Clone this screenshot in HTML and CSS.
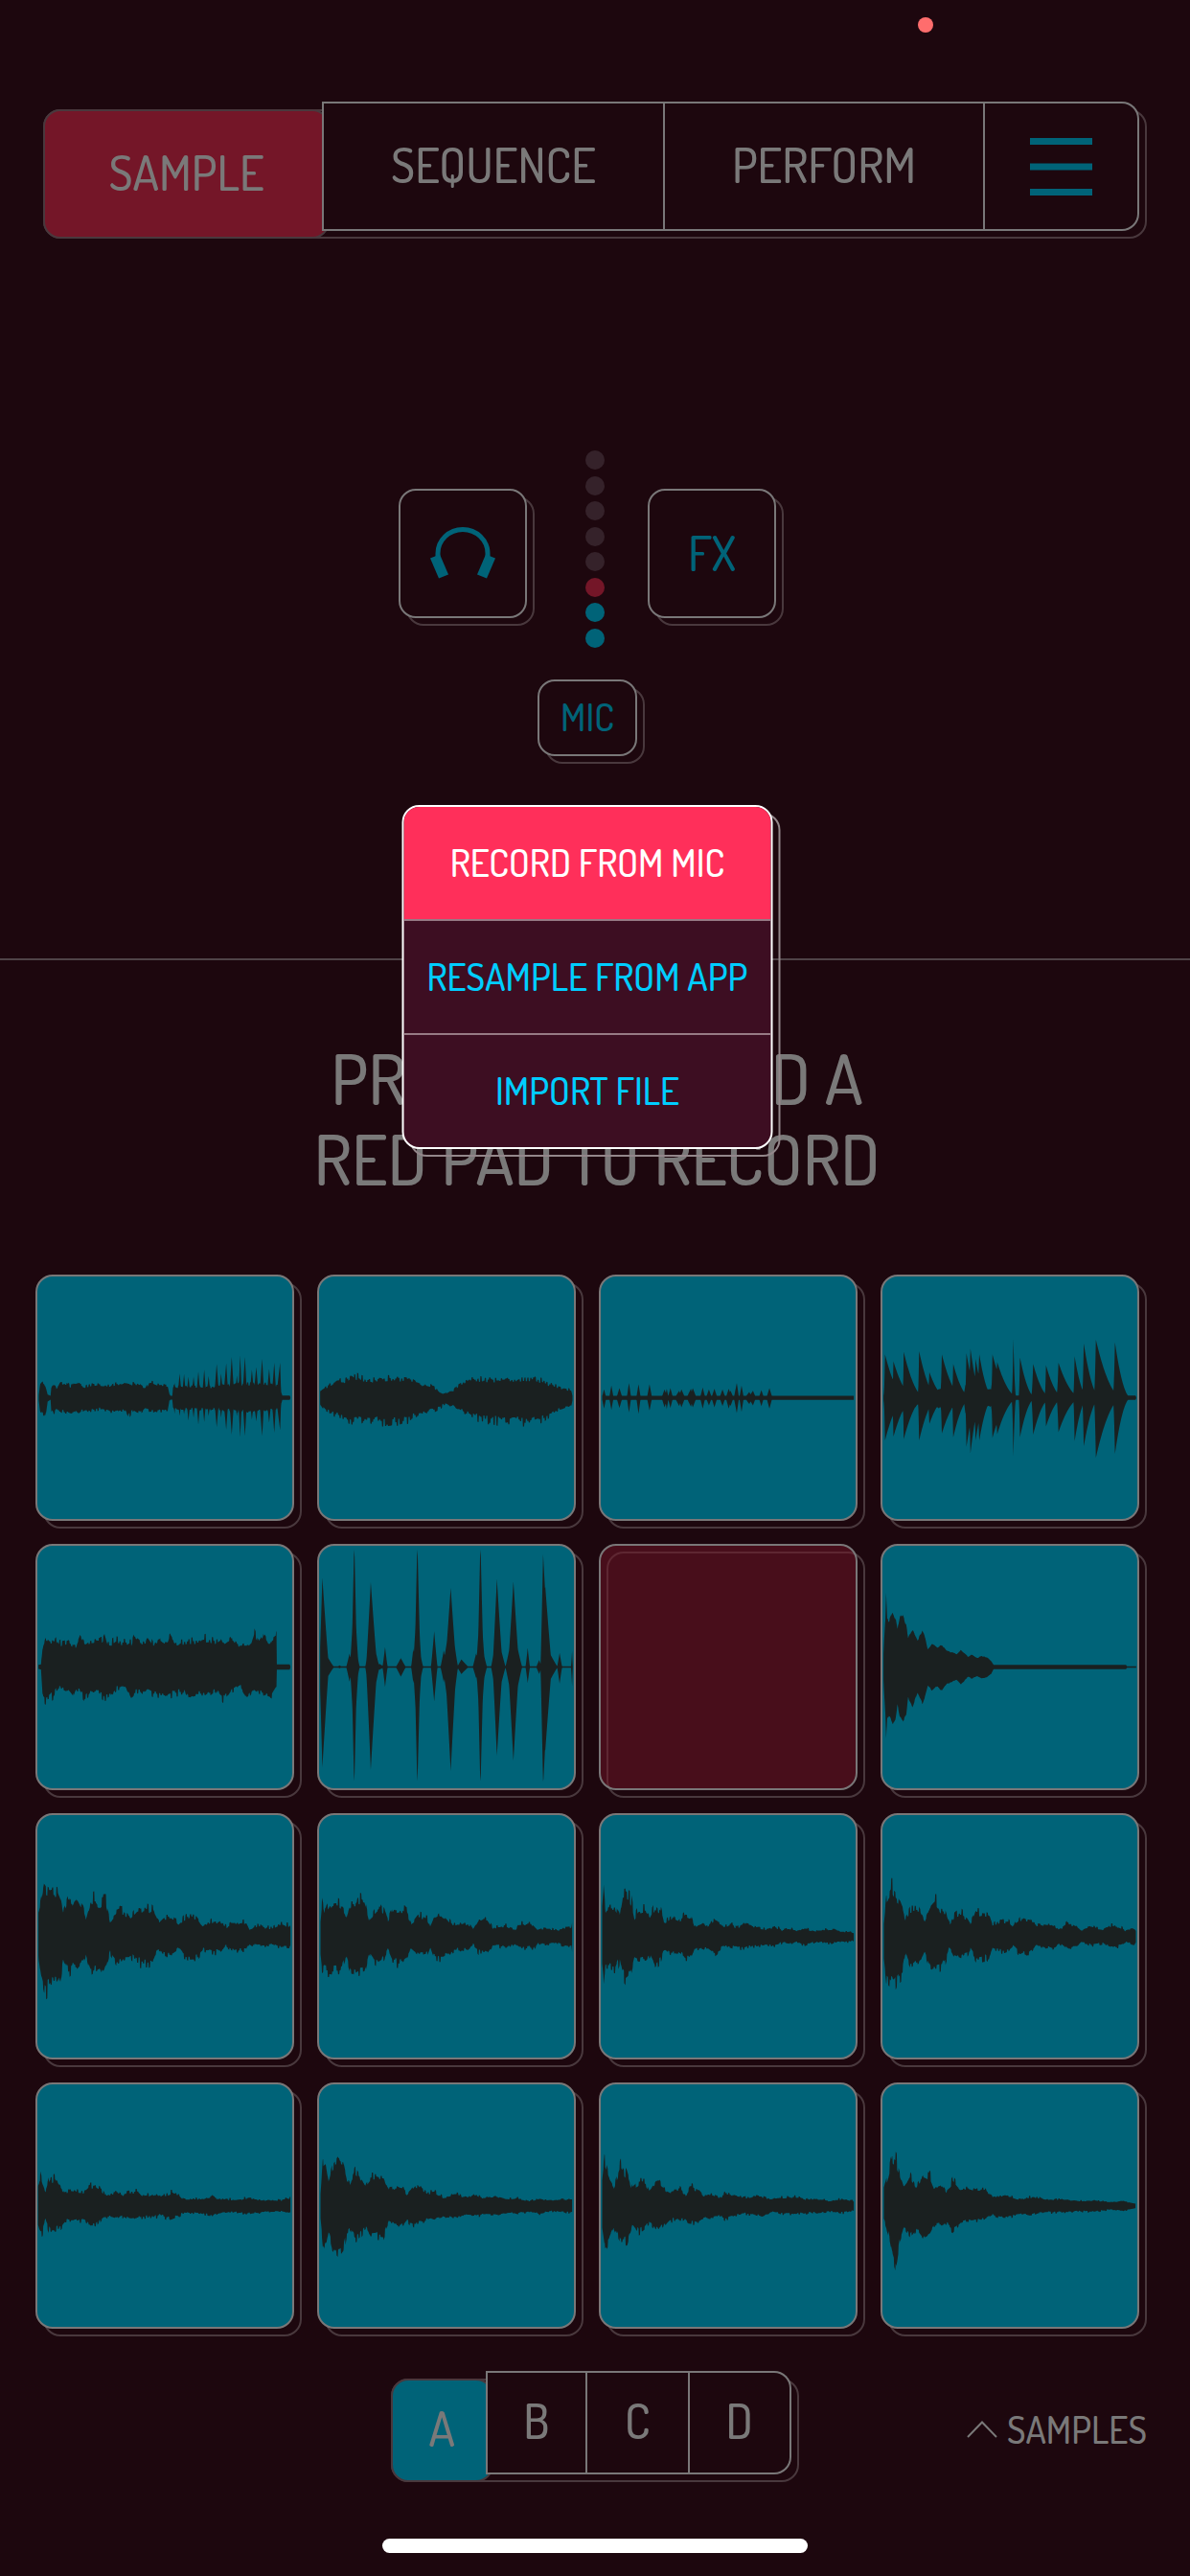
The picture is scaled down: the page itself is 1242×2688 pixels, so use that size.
FILE: index.html
```html
<!DOCTYPE html>
<html lang="en">
<head>
<meta charset="utf-8">
<meta name="viewport" content="width=device-width, initial-scale=1">
<title>Sampler</title>
<link rel="stylesheet" href="styles.css">
</head>
<body>
<div class="app">
  <div class="status-bar"><span class="recording-dot" title="Microphone in use"></span></div>

  <nav class="tabs segmented">
    <button class="segment segment-pressed tab-pressed" type="button">SAMPLE</button>
    <button class="segment segment-first" type="button">SEQUENCE</button>
    <button class="segment" type="button">PERFORM</button>
    <button class="segment segment-last segment-icon" type="button" aria-label="Menu">
      <svg class="menu-icon" viewBox="0 0 65 60" aria-hidden="true"><path d="M0 3.5H65M0 30H65M0 56.5H65"/></svg>
    </button>
  </nav>

  <main>
    <section class="input-panel">
      <div class="input-row">
        <button class="raised square-button" type="button" aria-label="Monitor">
          <svg class="headphone-icon" viewBox="0 0 68 54" aria-hidden="true">
            <path class="band" d="M8 31V27.500A26 25 0 0 1 60 27.500V31"/>
            <path class="cup" d="M0 32.500L10 28.500L19 49.500L9 53.500Z"/>
            <path class="cup" d="M68 32.500L58 28.500L49 49.500L59 53.500Z"/>
          </svg>
        </button>
        <div class="meter" role="img" aria-label="Input level">
          <span class="led"></span><span class="led"></span><span class="led"></span><span class="led"></span><span class="led"></span>
          <span class="led led-red"></span><span class="led led-blue"></span><span class="led led-blue"></span>
        </div>
        <button class="raised square-button" type="button">FX</button>
      </div>
      <div class="source">
        <button class="raised source-button" type="button" aria-haspopup="true" aria-expanded="true">MIC</button>
        <div class="source-menu">
          <ul class="source-list">
            <li><button class="source-item source-item-active" type="button">RECORD FROM MIC</button></li>
            <li><button class="source-item" type="button">RESAMPLE FROM APP</button></li>
            <li><button class="source-item" type="button">IMPORT FILE</button></li>
          </ul>
        </div>
      </div>
    </section>

    <section class="pad-panel">
      <h1 class="prompt">PRESS AND HOLD A<br>RED PAD TO RECORD</h1>
      <div class="pads">
        <button class="raised pad" type="button" aria-label="Pad 1"><svg class="wave" data-wave="0" viewBox="0 -380 695 760" preserveAspectRatio="none"></svg></button>
        <button class="raised pad" type="button" aria-label="Pad 2"><svg class="wave" data-wave="1" viewBox="0 -380 695 760" preserveAspectRatio="none"></svg></button>
        <button class="raised pad" type="button" aria-label="Pad 3"><svg class="wave" data-wave="2" viewBox="0 -380 695 760" preserveAspectRatio="none"></svg></button>
        <button class="raised pad" type="button" aria-label="Pad 4"><svg class="wave" data-wave="3" viewBox="0 -380 695 760" preserveAspectRatio="none"></svg></button>
        <button class="raised pad" type="button" aria-label="Pad 5"><svg class="wave" data-wave="4" viewBox="0 -380 695 760" preserveAspectRatio="none"></svg></button>
        <button class="raised pad" type="button" aria-label="Pad 6"><svg class="wave" data-wave="5" viewBox="0 -380 695 760" preserveAspectRatio="none"></svg></button>
        <button class="raised pad pad-empty" type="button" aria-label="Pad 7, empty"></button>
        <button class="raised pad" type="button" aria-label="Pad 8"><svg class="wave" data-wave="6" viewBox="0 -380 695 760" preserveAspectRatio="none"></svg></button>
        <button class="raised pad" type="button" aria-label="Pad 9"><svg class="wave" data-wave="7" viewBox="0 -380 695 760" preserveAspectRatio="none"></svg></button>
        <button class="raised pad" type="button" aria-label="Pad 10"><svg class="wave" data-wave="8" viewBox="0 -380 695 760" preserveAspectRatio="none"></svg></button>
        <button class="raised pad" type="button" aria-label="Pad 11"><svg class="wave" data-wave="9" viewBox="0 -380 695 760" preserveAspectRatio="none"></svg></button>
        <button class="raised pad" type="button" aria-label="Pad 12"><svg class="wave" data-wave="10" viewBox="0 -380 695 760" preserveAspectRatio="none"></svg></button>
        <button class="raised pad" type="button" aria-label="Pad 13"><svg class="wave" data-wave="11" viewBox="0 -380 695 760" preserveAspectRatio="none"></svg></button>
        <button class="raised pad" type="button" aria-label="Pad 14"><svg class="wave" data-wave="12" viewBox="0 -380 695 760" preserveAspectRatio="none"></svg></button>
        <button class="raised pad" type="button" aria-label="Pad 15"><svg class="wave" data-wave="13" viewBox="0 -380 695 760" preserveAspectRatio="none"></svg></button>
        <button class="raised pad" type="button" aria-label="Pad 16"><svg class="wave" data-wave="14" viewBox="0 -380 695 760" preserveAspectRatio="none"></svg></button>
      </div>
    </section>
  </main>

  <footer class="bottom-bar">
    <div class="banks segmented">
      <button class="segment segment-pressed bank-pressed" type="button">A</button>
      <button class="segment segment-first" type="button">B</button>
      <button class="segment" type="button">C</button>
      <button class="segment segment-last" type="button">D</button>
    </div>
    <button class="samples-button" type="button">
      <svg class="chevron" viewBox="0 0 32 18" aria-hidden="true"><path d="M1 17L16 1.500L31 17"/></svg>SAMPLES
    </button>
  </footer>
  <div class="home-indicator"></div>
</div>
<script src="waves.js"></script>
</body>
</html>
```
FILE: styles.css
```css
:root {
  --page: #1d070e;
  --line: #797778;
  --line-back: #49383d;
  --text: #7a7979;
  --blue: #006378;
  --red: #741628;
}

* {
  box-sizing: border-box;
}

body {
  margin: 0;
  background: var(--page);
  color: var(--text);
  font-family: "Dosis", "Open Sans Condensed Light", sans-serif;
  font-size: 39px;
  font-weight: 500;
  line-height: 48px;
}

button {
  margin: 0;
  padding: 0;
  border: 0;
  background: none;
  color: inherit;
  font: inherit;
}

.app {
  display: flex;
  flex-direction: column;
  min-height: 100vh;
}

.status-bar {
  display: flex;
  justify-content: flex-end;
  height: 106px;
  padding: 18px 268px 0 0;
}

.recording-dot {
  width: 16px;
  height: 16px;
  border-radius: 50%;
  background: #ff6d6d;
}

/* Segmented bars: a raised front plate over an offset back plate */
.segmented {
  position: relative;
  display: grid;
  font-size: 50px;
}

.segmented::before {
  content: "";
  position: absolute;
  inset: 8px -8px -8px 8px;
  border: 2px solid var(--line-back);
  border-radius: 18px;
}

.tabs {
  grid-template-columns: 299fr 358fr 334fr 161fr;
  height: 135px;
  margin: 0 53px 0 37px;
}

.segment {
  position: relative;
  z-index: 1;
  display: flex;
  align-items: center;
  justify-content: center;
  padding-bottom: 4px;
  border: solid var(--line);
  border-width: 2px 2px 2px 0;
  background: var(--page);
}

.segment-first {
  border-left-width: 2px;
}

.segment-last {
  border-radius: 0 18px 18px 0;
}

.segment-icon {
  padding-bottom: 0;
}

.segment-pressed {
  z-index: 0;
  margin: 8px -8px -8px 8px;
  border: 2px solid var(--line-back);
  border-radius: 18px;
}

.tab-pressed {
  background: var(--red);
}

.bank-pressed {
  background: var(--blue);
}

.menu-icon {
  width: 65px;
  height: 60px;
  fill: none;
  stroke: var(--blue);
  stroke-width: 7;
}

/* Raised buttons carry the same offset outline behind them */
.raised {
  position: relative;
  border: 2px solid var(--line);
  border-radius: 18px;
}

.raised::before {
  content: "";
  position: absolute;
  z-index: -1;
  inset: 6px -10px -10px 6px;
  border: 2px solid var(--line-back);
  border-radius: 18px;
}

.input-panel {
  display: flex;
  flex-direction: column;
  align-items: center;
  padding: 229px 53px 211px 37px;
  color: var(--blue);
}

.input-row {
  display: flex;
  align-items: flex-start;
}

.square-button,
.source-button {
  padding-bottom: 2px;
  background: var(--page);
}

.square-button {
  display: flex;
  align-items: center;
  justify-content: center;
  width: 134px;
  height: 135px;
  margin-top: 40px;
  font-size: 50px;
}

.headphone-icon {
  width: 68px;
  height: 54px;
}

.band {
  fill: none;
  stroke: var(--blue);
  stroke-width: 5;
}

.cup {
  fill: var(--blue);
}

.meter {
  display: flex;
  flex-direction: column;
  justify-content: space-between;
  height: 206px;
  margin: 0 45px 0 61px;
}

.led {
  width: 20px;
  height: 20px;
  border-radius: 50%;
  background: #35222a;
}

.led-red {
  background: var(--red);
}

.led-blue {
  background: var(--blue);
}

.source {
  position: relative;
  margin-top: 33px;
}

.source-button {
  display: block;
  width: 104px;
  height: 80px;
}

.source-menu {
  position: absolute;
  z-index: 2;
  top: 131px;
  left: 50%;
  width: 387px;
  transform: translateX(-50%);
}

.source-menu::before {
  content: "";
  position: absolute;
  inset: 8px -8px -8px 8px;
  border: 2px solid #93868a;
  border-radius: 18px;
}

.source-list {
  position: relative;
  margin: 0;
  padding: 0;
  overflow: hidden;
  border: 2px solid #fff;
  border-radius: 18px;
  background: #3d0e22;
  list-style: none;
}

.source-list li + li {
  border-top: 2px solid #977a85;
}

.source-item {
  display: block;
  width: 100%;
  height: 117px;
  padding-bottom: 2px;
  color: #00cdff;
}

.source-item-active {
  background: #ff2f5a;
  color: #fff;
}

.pad-panel {
  padding: 80px 53px 0 37px;
  border-top: 2px solid #4f4347;
}

.prompt {
  margin: 0 0 80px 20px;
  font-size: 73px;
  font-weight: 500;
  line-height: 84px;
  text-align: center;
}

.pads {
  display: grid;
  grid-template-columns: repeat(4, 1fr);
  gap: 24px;
}

.pad {
  aspect-ratio: 270 / 257;
  background: var(--blue);
}

.pad-empty {
  background: rgba(116, 22, 40, 0.5);
}

.wave {
  display: block;
  width: 100%;
  height: 100%;
  fill: #1a2020;
}

.bottom-bar {
  display: grid;
  grid-template-columns: 1fr auto 1fr;
  margin: 44px 53px 0 37px;
}

.banks {
  grid-column: 2;
  grid-template-columns: repeat(4, 1fr);
  width: 426px;
  height: 108px;
}

.samples-button {
  display: flex;
  align-items: center;
  justify-self: end;
  gap: 10px;
  margin: 14px -8px 0 0;
}

.chevron {
  width: 32px;
  height: 18px;
  fill: none;
  stroke: var(--text);
  stroke-width: 2;
}

.home-indicator {
  align-self: center;
  width: 444px;
  height: 15px;
  margin: 67px 0 24px;
  border-radius: 8px;
  background: #fff;
}
```
FILE: waves.js
```js
// Each sample: envelope points "x up down", roughness, and optional
// transients "x up down attack release" laid over the envelope.
const samples = [
  { rough: 0.14, env: "4 8 8,8 42 45,14 48 52,22 40 55,28 10 12,36 6 6,38 30 38,46 40 50,52 28 38,62 44 42,80 47 46,90 36 44,100 48 42,112 42 50,130 34 35,145 40 42,170 40 35,200 38 44,215 46 42,240 44 40,248 42 60,262 44 38,280 40 48,294 28 30,305 48 40,340 42 42,355 40 42,360 12 10,363 6 6,368 6 6,370 38 30,380 34 36,480 34 36,560 44 42,660 40 34,667 12 10,668 7 7,688 7 7,690 2 2", hits: "374 46 50 4 5,388 76 57 6 6,400 74 52 6 6,412 66 72 6 6,426 66 62 6 6,439 82 84 6 6,455 88 76 6 6,467 68 58 6 6,489 106 92 7 7,501 76 62 6 6,515 108 100 8 6,530 128 116 7 7,544 70 58 6 6,553 132 124 5 5,566 128 120 7 6,585 88 68 7 7,597 96 74 8 7,613 122 120 8 6,632 90 78 7 7,646 110 110 7 6,662 110 102 11 3" },
  { rough: 0.14, spikes: 0.2, env: "3 20 20,20 34 40,50 46 54,75 56 62,90 70 72,105 60 68,130 54 64,150 56 68,175 58 68,200 54 66,230 58 66,255 54 58,265 44 54,300 36 42,325 20 30,342 12 20,355 20 22,368 24 24,380 38 36,410 50 48,435 58 60,460 54 64,500 56 66,512 56 70,540 54 66,568 58 72,585 62 68,600 52 66,620 44 52,640 36 44,665 28 32,688 20 22,691 6 8" },
  { rough: 0.02, env: "4 6 7,690 6 7", hits: "9 26 34 6 6,29 38 38 6 6,51 30 32 8 8,77 46 46 6 6,103 42 50 6 6,133 42 40 7 7,174 26 30 8 8,180 28 36 5 5,190 30 32 7 7,214 22 26 12 6,220 26 30 8 10,246 28 28 12 6,251 30 30 8 10,278 32 34 7 7,295 26 24 8 8,310 28 30 8 8,332 26 26 8 8,349 28 34 8 8,354 22 26 8 8,371 46 48 8 6,384 38 44 6 6,405 18 20 12 8,415 22 24 12 8,438 24 26 7 7,460 30 34 8 8" },
  { rough: 0.07, pow: 2, env: "3 7 7,8 40 50,60 36 42,90 26 30,98 14 18,104 30 34,160 26 30,222 8 8,226 40 50,270 60 70,276 26 26,296 26 26,300 60 60,330 40 40,352 7 7,375 7 7,392 34 36,400 7 7,690 7 7,692 2 2", hits: "7 136 134 4 60,30 114 122 4 60,58 144 130 3 60,100 146 134 4 54,128 80 82 6 50,162 136 112 5 60,193 106 124 4 50,229 140 154 4 40,240 154 174 6 35,254 122 134 6 35,264 136 134 8 40,300 136 126 4 60,313 112 114 10 60,357 184 184 5 8,375 126 124 4 44,411 106 116 6 50,446 102 90 4 50,480 110 108 6 64,524 130 136 4 38,549 170 152 5 46,582 182 188 6 74,634 174 176 6 44" },
  { rough: 0.09, spikes: 0.16, env: "3 7 6,10 8 8,14 60 90,22 84 98,45 76 84,52 86 70,60 68 64,85 78 78,97 66 98,105 64 66,116 94 70,130 72 90,145 80 74,160 84 74,177 84 84,184 98 92,192 68 90,215 80 66,240 72 60,256 70 92,264 92 78,280 76 74,295 72 84,301 92 70,315 66 78,335 86 84,355 74 88,361 94 84,375 72 78,400 74 74,410 76 94,440 78 82,460 84 82,485 76 64,498 88 84,512 68 94,530 84 68,555 64 60,574 68 94,584 74 78,591 100 68,602 74 76,616 102 84,630 76 84,640 76 90,650 80 70,652 100 66,653 8 8,688 8 8,690 2 2" },
  { rough: 0.02, pow: 1.1, env: "3 2 2,692 2 2", hits: "9 280 315 8 18,9 60 60 7 32,56 5 4 8 8,83 42 46 9 9,96 400 384 8 8,96 230 230 12 12,96 90 90 15 15,141 266 322 13 18,141 120 140 15 24,165 10 8 12 14,180 62 62 7 7,223 28 30 14 14,257 58 50 6 6,268 398 378 8 9,268 230 230 12 12,268 90 90 16 16,314 112 108 9 9,340 52 48 9 9,359 248 326 16 16,359 160 190 22 20,388 24 22 12 20,428 42 34 9 9,440 398 386 8 9,440 210 210 12 13,440 90 90 18 18,485 276 278 12 16,485 110 110 16 24,530 268 294 15 16,530 120 130 22 24,569 60 50 6 6,600 22 22 8 8,611 354 374 7 18,617 250 260 10 18,617 70 70 15 34,656 44 52 7 7,690 50 60 3 2" },
  { rough: 0.03, env: "3 40 40,5 90 90,8 150 150,10 236 230,13 150 160,18 145 150,28 172 176,36 150 160,41 116 120,48 160 160,55 166 170,65 130 150,70 94 96,82 118 124,96 84 80,109 116 114,117 90 90,124 54 58,135 72 74,150 62 60,162 70 74,175 50 54,190 46 46,202 40 40,214 52 54,225 42 42,233 32 30,244 38 36,258 28 28,270 34 36,285 30 32,296 20 22,303 7 7,664 7 7,667 2 2,692 2 2" },
  { rough: 0.12, spikes: 0.22, env: "3 74 60,10 106 108,18 154 142,25 142 152,35 136 138,54 140 146,62 116 124,70 70 70,84 100 106,95 90 94,109 122 100,122 92 84,132 56 60,145 110 110,158 112 100,170 96 96,178 104 118,188 102 92,198 48 50,215 70 82,235 74 70,255 56 58,272 80 74,300 86 78,315 74 72,330 42 40,345 58 54,370 58 54,385 36 36,400 52 56,418 66 66,437 54 60,452 32 38,475 44 46,500 38 44,515 28 28,535 42 44,570 44 40,580 20 22,600 30 28,640 24 26,665 34 32,688 32 34,690 28 32" },
  { rough: 0.12, spikes: 0.22, env: "4 50 60,8 106 106,16 70 96,30 90 96,50 94 98,62 82 94,74 60 60,85 100 100,100 100 110,107 112 106,123 102 100,136 46 50,150 74 72,165 86 82,178 68 64,188 44 40,200 74 74,220 80 82,240 68 62,252 38 38,270 62 54,295 54 50,303 30 30,312 52 58,328 70 62,345 56 60,365 32 42,385 42 40,410 34 38,420 22 24,435 48 46,460 46 46,475 24 26,510 32 34,535 20 26,545 36 36,575 38 34,584 36 38,595 20 22,620 26 26,650 18 20,665 26 30,688 28 28,690 42 48" },
  { rough: 0.12, spikes: 0.2, env: "4 90 90,8 146 138,13 80 90,25 88 94,40 90 98,52 62 68,60 116 112,68 120 126,82 112 106,92 56 60,105 80 74,122 82 72,134 60 54,148 90 88,165 72 72,173 40 42,195 60 56,210 44 42,230 64 62,248 58 62,256 30 38,280 40 40,290 30 36,308 50 54,325 40 40,335 26 28,360 34 34,370 24 30,390 38 38,410 32 30,430 28 30,450 20 24,475 30 30,495 18 18,520 24 22,535 16 16,555 24 26,575 16 18,600 18 18,630 22 22,655 14 16,680 14 16,690 10 12" },
  { rough: 0.12, spikes: 0.2, env: "4 40 60,10 116 116,26 146 136,32 130 142,45 112 114,55 86 104,62 54 54,75 78 92,100 78 76,115 46 46,130 84 90,146 102 94,160 78 88,172 74 68,182 38 38,195 58 58,215 66 66,230 56 54,240 40 38,255 72 68,280 70 62,290 66 70,300 34 40,325 48 46,345 42 44,355 28 28,375 54 52,400 52 54,420 36 28,445 36 36,470 30 34,480 20 24,505 38 36,530 30 32,542 18 18,570 28 26,600 20 22,620 32 32,645 30 30,662 18 18,688 24 26,691 20 20" },
  { rough: 0.12, spikes: 0.2, env: "2 60 60,6 88 78,14 62 74,22 40 46,34 76 76,48 84 74,62 60 68,76 40 46,100 50 48,125 40 42,140 56 56,160 58 60,175 46 40,185 32 32,215 40 40,235 30 30,245 44 40,275 42 38,285 30 34,320 32 34,330 28 28,365 38 40,385 34 32,395 22 24,435 20 22,455 20 26,475 28 32,495 20 24,530 18 20,580 22 24,620 16 18,665 16 18,680 20 22,690 22 20" },
  { rough: 0.1, spikes: 0.16, env: "4 30 40,10 116 108,18 126 132,26 70 84,36 116 126,52 146 148,66 130 132,76 80 80,84 70 72,98 102 98,112 82 88,126 60 66,140 86 90,175 86 92,190 48 50,210 58 60,230 50 54,240 34 44,262 62 62,282 50 46,295 38 38,315 42 42,340 24 32,375 40 40,395 26 28,430 32 32,450 22 26,480 28 30,510 20 22,545 22 22,570 14 20,600 20 24,640 16 16,690 20 22" },
  { rough: 0.12, spikes: 0.2, env: "4 70 70,10 126 116,22 88 100,36 60 62,54 120 108,72 90 98,86 46 54,104 68 78,122 68 68,132 44 54,158 76 78,178 48 54,190 40 40,215 52 48,232 32 40,245 56 54,268 46 46,280 30 40,310 34 38,322 24 30,345 38 40,375 28 28,385 22 24,420 28 28,440 28 32,465 20 20,490 24 24,530 26 24,560 18 22,590 20 22,620 14 18,660 20 20,690 14 16" },
  { rough: 0.1, spikes: 0.2, env: "4 44 40,14 80 70,26 142 134,38 130 176,48 94 104,58 60 70,76 90 94,92 60 70,110 90 96,130 84 80,140 56 60,165 64 60,174 44 56,192 72 70,212 50 52,235 50 46,255 50 44,280 52 40,300 26 28,335 32 38,370 20 28,420 26 24,445 18 20,490 20 20,530 14 16,580 16 18,620 10 12,655 14 16,690 6 8" }
];

const parse = (text) => (text ? text.split(",").map((p) => p.split(" ").map(Number)) : []);

// Repeatable noise, so that a pad always looks the same
function noise(seed) {
  let s = seed * 7919 + 17;
  return () => {
    s = (s * 16807) % 2147483647;
    return (s / 2147483647) * 2 - 1;
  };
}

function outline(sample, seed) {
  const env = parse(sample.env);
  const hits = parse(sample.hits);
  const rand = noise(seed + 1);
  const jitter = () => {
    const spike = rand() > 0.6 ? (sample.spikes || 0) : 0;
    return 1 + rand() * sample.rough + spike;
  };
  const top = [];
  const bottom = [];
  const last = env[env.length - 1][0];
  let i = 0;
  let jitterUp = 1;
  let jitterDown = 1;
  for (let x = env[0][0]; x <= last; x += 1) {
    while (i < env.length - 2 && env[i + 1][0] < x) i++;
    const [x0, u0, d0] = env[i];
    const [x1, u1, d1] = env[i + 1];
    const t = Math.min(1, (x - x0) / (x1 - x0));
    let up = u0 + (u1 - u0) * t;
    let down = d0 + (d1 - d0) * t;
    // Hold each roughness value for a few steps so that it stays visible
    if (x % 4 === 0) {
      jitterUp = jitter();
      jitterDown = jitter();
    }
    if (up > 10) {
      up *= jitterUp;
      down *= jitterDown;
    }
    for (const [hx, hu, hd, attack, release] of hits) {
      const d = x < hx ? (hx - x) / attack : (x - hx) / release;
      if (d >= 1) continue;
      const k = Math.pow(1 - d, sample.pow || 1);
      up = Math.max(up, hu * k);
      down = Math.max(down, hd * k);
    }
    up = Math.min(up, 368);
    down = Math.min(down, 358);
    top.push(`${x} ${(-up).toFixed(1)}`);
    bottom.unshift(`${x} ${down.toFixed(1)}`);
  }
  return "M" + top.concat(bottom).join("L") + "Z";
}

document.querySelectorAll(".wave").forEach((svg) => {
  const index = Number(svg.dataset.wave);
  const path = document.createElementNS("http://www.w3.org/2000/svg", "path");
  path.setAttribute("d", outline(samples[index], index));
  svg.append(path);
});
```
